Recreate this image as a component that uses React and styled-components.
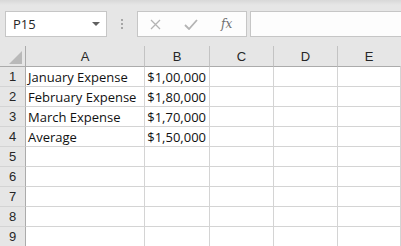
import React from 'react';
import styled, { createGlobalStyle } from 'styled-components';

const GlobalStyle = createGlobalStyle`
  html, body {
    margin: 0;
    padding: 0;
    background: #e6e6e6;
  }
`;

const Window = styled.div`
  width: 401px;
  height: 246px;
  overflow: hidden;
  background: #e6e6e6;
  font-family: "Open Sans", "Liberation Sans", sans-serif;
`;

const FormulaBar = styled.div`
  display: flex;
  align-items: flex-start;
  height: 46px;
  box-sizing: border-box;
  padding: 11px 0 0 5px;
  background: linear-gradient(to bottom, #d8d8d8 0px, #e6e6e6 5px);
`;

const NameBox = styled.div`
  display: flex;
  align-items: center;
  justify-content: space-between;
  box-sizing: border-box;
  width: 102px;
  height: 26px;
  padding: 0 6px 0 7px;
  background: #fff;
  border: 1px solid #c6c6c6;
  font-size: 13px;
  color: #262626;
`;

const Caret = styled.span`
  width: 0;
  height: 0;
  border-left: 4px solid transparent;
  border-right: 4px solid transparent;
  border-top: 4px solid #606060;
`;

const Grip = styled.div`
  display: flex;
  flex-direction: column;
  gap: 2px;
  margin: 8px 14px 0 14px;
`;

const Dot = styled.span`
  width: 2px;
  height: 2px;
  background: #a6a6a6;
`;

const FxGroup = styled.div`
  display: flex;
  align-items: center;
  box-sizing: border-box;
  width: 110px;
  height: 26px;
  background: #fdfdfd;
  border: 1px solid #c6c6c6;
  padding-left: 12px;
  gap: 18px;
`;

const FxLabel = styled.span`
  font-family: "DejaVu Serif", "Liberation Serif", serif;
  font-style: italic;
  font-size: 12px;
  color: #6f6f6f;
  margin-left: 5px;
`;

const FormulaInput = styled.div`
  flex: 1;
  height: 26px;
  margin-left: 3px;
  box-sizing: border-box;
  background: #fdfdfd;
  border: 1px solid #c6c6c6;
  border-right: none;
`;

const Grid = styled.div`
  display: grid;
  grid-template-columns: 26px 119px 65px 64px 64px 1fr;
  grid-template-rows: 21px;
  grid-auto-rows: 20px;
`;

const ColHead = styled.div`
  display: flex;
  align-items: flex-end;
  justify-content: center;
  padding-bottom: 2px;
  box-sizing: border-box;
  background: #e6e6e6;
  border-bottom: 1px solid #ababab;
  border-right: 1px solid ${p => (p.$last ? 'transparent' : '#c3c3c3')};
  font-family: "Liberation Sans", sans-serif;
  font-size: 13px;
  color: #262626;
`;

const Corner = styled(ColHead)`
  border-right: 1px solid #ababab;
  align-items: center;
  justify-content: flex-end;
  padding: 3px 3px 0 0;
`;

const RowHead = styled.div`
  display: flex;
  align-items: center;
  justify-content: center;
  box-sizing: border-box;
  background: #e6e6e6;
  border-right: 1px solid #ababab;
  border-bottom: 1px solid #d4d4d4;
  font-family: "Liberation Sans", sans-serif;
  font-size: 13px;
  color: #262626;
`;

const Cell = styled.div`
  display: flex;
  align-items: center;
  justify-content: ${p => (p.$num ? 'flex-end' : 'flex-start')};
  box-sizing: border-box;
  padding: 0 3px 0 2px;
  background: #fff;
  border-right: 1px solid #d4d4d4;
  border-bottom: 1px solid #d4d4d4;
  font-size: 13px;
  color: #111;
  white-space: nowrap;
`;

const columns = ['A', 'B', 'C', 'D', 'E'];

const data = [
  ['January Expense', '$1,00,000'],
  ['February Expense', '$1,80,000'],
  ['March Expense', '$1,70,000'],
  ['Average', '$1,50,000'],
];

const rows = Array.from({ length: 9 }, (_, i) => data[i] || ['', '']);

export default function App() {
  return (
    <Window>
      <GlobalStyle />
      <FormulaBar>
        <NameBox>
          P15
          <Caret />
        </NameBox>
        <Grip>
          <Dot />
          <Dot />
          <Dot />
        </Grip>
        <FxGroup>
          <svg width="11" height="11" viewBox="0 0 11 11">
            <path d="M1 1L10 10M10 1L1 10" stroke="#b4b4b4" strokeWidth="1.3" fill="none" />
          </svg>
          <svg width="14" height="11" viewBox="0 0 14 11" style={{ marginLeft: 5 }}>
            <path d="M1 6L5 10L13 1" stroke="#b4b4b4" strokeWidth="1.8" fill="none" />
          </svg>
          <FxLabel>fx</FxLabel>
        </FxGroup>
        <FormulaInput />
      </FormulaBar>
      <Grid>
        <Corner>
          <svg width="13" height="13" viewBox="0 0 13 13">
            <path d="M13 0L13 13L0 13Z" fill="#b9b9b9" />
          </svg>
        </Corner>
        {columns.map((c, i) => (
          <ColHead key={c} $last={i === columns.length - 1}>{c}</ColHead>
        ))}
        {rows.map((r, i) => (
          <React.Fragment key={i}>
            <RowHead>{i + 1}</RowHead>
            <Cell>{r[0]}</Cell>
            <Cell $num>{r[1]}</Cell>
            <Cell />
            <Cell />
            <Cell />
          </React.Fragment>
        ))}
      </Grid>
    </Window>
  );
}
